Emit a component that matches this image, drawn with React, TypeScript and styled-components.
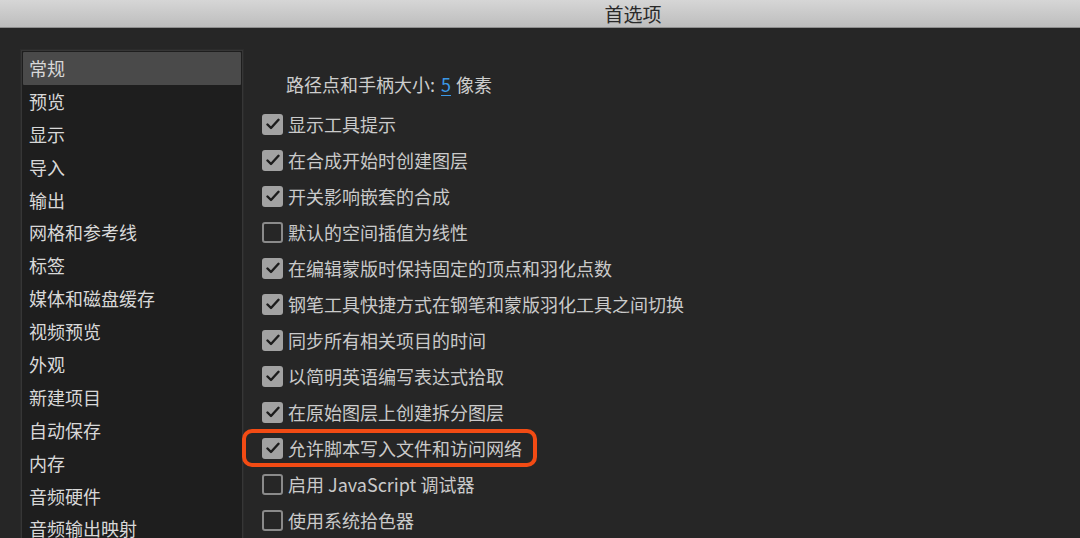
import React from 'react';
import styled, {createGlobalStyle} from 'styled-components';

const GlobalStyle = createGlobalStyle`
  html, body {
    margin: 0;
    padding: 0;
    background: #262626;
    font-family: "Noto Sans CJK SC", "Noto Sans", sans-serif;
    overflow: hidden;
  }
`;

const TitleBar = styled.div`
  height: 27px;
  display: flex;
  align-items: center;
  justify-content: center;
  padding-left: 186px;
  background: linear-gradient(#d6d6d6, #bdbdbd);
  border-bottom: 1px solid #8e8e8e;
  color: #2a2a2a;
  font-size: 19px;
`;

const Body = styled.div`
  display: flex;
  align-items: flex-start;
  padding: 22px 0 0 21px;
  height: 510px;
  box-sizing: border-box;
`;

const Sidebar = styled.div`
  width: 222px;
  height: 520px;
  box-sizing: border-box;
  background: #1e1e1e;
  border: 1px solid #363636;
  box-shadow: 0 0 0 1px #2b2b2b;
  padding: 1px 1px 0 1px;
`;

const NavItem = styled.div<{ $active?: boolean }>`
  height: 32.9px;
  line-height: 33px;
  padding-left: 6px;
  font-size: 18px;
  color: #d8d8d8;
  background: ${p => (p.$active ? '#4a4a4a' : 'transparent')};
  border-radius: 1px;
`;

const Content = styled.div`
  margin-left: 19px;
  padding-top: 16px;
  display: flex;
  flex-direction: column;
`;

const HeaderRow = styled.div`
  height: 36px;
  line-height: 36px;
  margin-bottom: 4px;
  padding-left: 24px;
  font-size: 18px;
  color: #cdcdcd;
`;

const Value = styled.span`
  color: #3b98e6;
  text-decoration: underline;
  text-underline-offset: 3px;
  margin: 0 5px 0 6px;
`;

const Row = styled.div<{ $highlight?: boolean }>`
  position: relative;
  display: flex;
  align-items: center;
  width: fit-content;
  height: 36px;
  gap: 5px;
  font-size: 18px;
  color: #cacaca;

  ${p => p.$highlight && `
    &::before {
      content: '';
      position: absolute;
      left: -20px;
      right: -15px;
      top: -1px;
      bottom: -1px;
      border: 4px solid #f24b14;
      border-radius: 10px;
    }
  `}
`;

const Box = styled.span<{ $checked: boolean }>`
  width: 21px;
  height: 21px;
  box-sizing: border-box;
  border-radius: 3px;
  display: flex;
  align-items: center;
  justify-content: center;
  background: ${p => (p.$checked ? '#a2a2a2' : 'transparent')};
  border: ${p => (p.$checked ? 'none' : '2px solid #8a8a8a')};
`;

const navItems = [
    '常规', '预览', '显示', '导入', '输出', '网格和参考线', '标签', '媒体和磁盘缓存',
    '视频预览', '外观', '新建项目', '自动保存', '内存', '音频硬件', '音频输出映射',
];

const options: { label: string; checked: boolean; highlight?: boolean }[] = [
    {label: '显示工具提示', checked: true},
    {label: '在合成开始时创建图层', checked: true},
    {label: '开关影响嵌套的合成', checked: true},
    {label: '默认的空间插值为线性', checked: false},
    {label: '在编辑蒙版时保持固定的顶点和羽化点数', checked: true},
    {label: '钢笔工具快捷方式在钢笔和蒙版羽化工具之间切换', checked: true},
    {label: '同步所有相关项目的时间', checked: true},
    {label: '以简明英语编写表达式拾取', checked: true},
    {label: '在原始图层上创建拆分图层', checked: true},
    {label: '允许脚本写入文件和访问网络', checked: true, highlight: true},
    {label: '启用 JavaScript 调试器', checked: false},
    {label: '使用系统拾色器', checked: false},
];

function Checkbox({checked}: { checked: boolean }) {
    return (
        <Box $checked={checked}>
            {checked && (
                <svg width="14" height="12" viewBox="0 0 14 12">
                    <path d="M1.5 6.5 L5 10 L12.5 1.8" fill="none" stroke="#1c1c1c"
                          strokeWidth="2.4" strokeLinecap="round" strokeLinejoin="round"/>
                </svg>
            )}
        </Box>
    );
}

export default function App() {
    return (
        <>
            <GlobalStyle/>
            <TitleBar>首选项</TitleBar>
            <Body>
                <Sidebar>
                    {navItems.map((n, i) => <NavItem key={n} $active={i === 0}>{n}</NavItem>)}
                </Sidebar>
                <Content>
                    <HeaderRow>
                        路径点和手柄大小:<Value>5</Value>像素
                    </HeaderRow>
                    {options.map(o => (
                        <Row key={o.label} $highlight={o.highlight}>
                            <Checkbox checked={o.checked}/>
                            <span>{o.label}</span>
                        </Row>
                    ))}
                </Content>
            </Body>
        </>
    );
}
